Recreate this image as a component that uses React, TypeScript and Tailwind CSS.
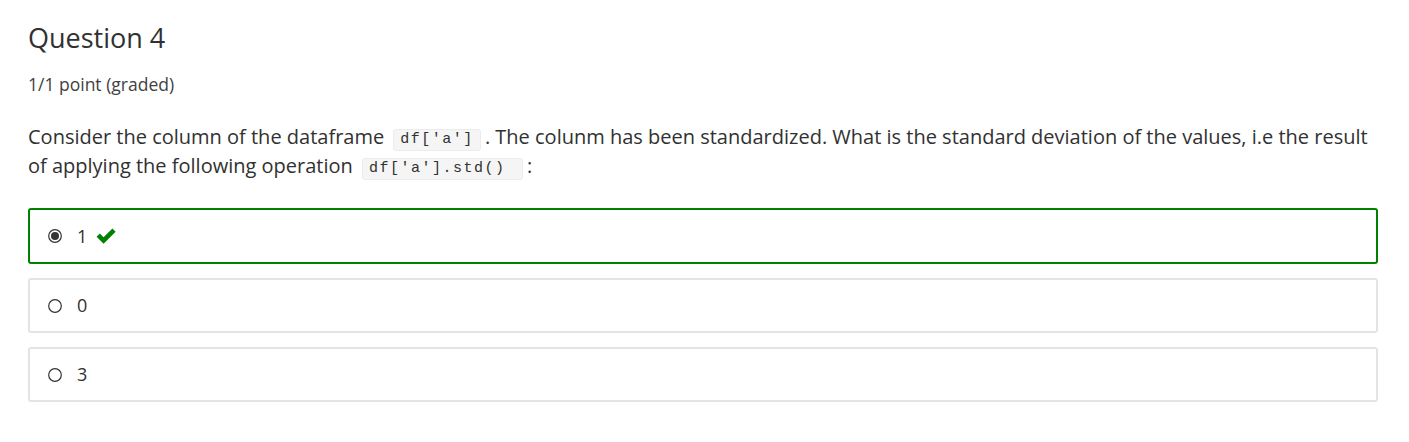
const options = [
  { label: "1", checked: true, correct: true },
  { label: "0", checked: false, correct: false },
  { label: "3", checked: false, correct: false },
];

function Radio({ checked }: { checked: boolean }) {
  return (
    <svg width="14" height="14" viewBox="0 0 14 14" className="shrink-0">
      <circle cx="7" cy="7" r="6.3" fill="#fff" stroke="#333" strokeWidth="1.2" />
      {checked && <circle cx="7" cy="7" r="4" fill="#333" />}
    </svg>
  );
}

function Check() {
  return (
    <svg width="22" height="18" viewBox="0 0 21 17" className="ml-[8px]">
      <path d="M1.5 9.2 L4.6 6.1 L8.2 9.7 L16.6 1.3 L19.7 4.4 L8.2 15.9 Z" fill="#008100" />
    </svg>
  );
}

function Code({ children }: { children: string }) {
  return (
    <code className="mx-[4px] inline-block rounded-[3px] border border-[#ececec] bg-[#f5f5f5] px-[6px] py-0 font-['Liberation_Mono','Courier_New',monospace] text-[15px] leading-[20px] tracking-[1.5px] text-[#313131] align-[1px]">
      {children}
    </code>
  );
}

export default function App() {
  return (
    <div className="min-h-[442px] bg-white px-[28px] pt-[20px] font-['Open_Sans',sans-serif] text-[#313131]">
      <h3 className="text-[27px] leading-[36px] text-[#313131]">Question 4</h3>
      <div className="mt-[16px] text-[17.5px] leading-[24px] text-[#414141]">1/1 point (graded)</div>

      <p className="mt-[26px] text-[20px] leading-[29px]">
        Consider the column of the dataframe <Code>df['a']</Code>. The colunm has been standardized. What is
        the standard deviation of the values, i.e the result of applying the following operation{" "}
        <Code>df['a'].std()&nbsp;</Code>:
      </p>

      <div className="mt-[28px] mr-[3px] flex flex-col gap-[14px]">
        {options.map((o) => (
          <div
            key={o.label}
            className={
              o.checked
                ? "flex h-[56px] items-center rounded-[3px] border-2 border-[#008100] pl-[18px]"
                : "flex h-[55px] items-center rounded-[3px] border-2 border-[#e4e4e4] pl-[18px]"
            }
          >
            <Radio checked={o.checked} />
            <span className="ml-[15px] text-[18px]">{o.label}</span>
            {o.correct && <Check />}
          </div>
        ))}
      </div>
    </div>
  );
}
